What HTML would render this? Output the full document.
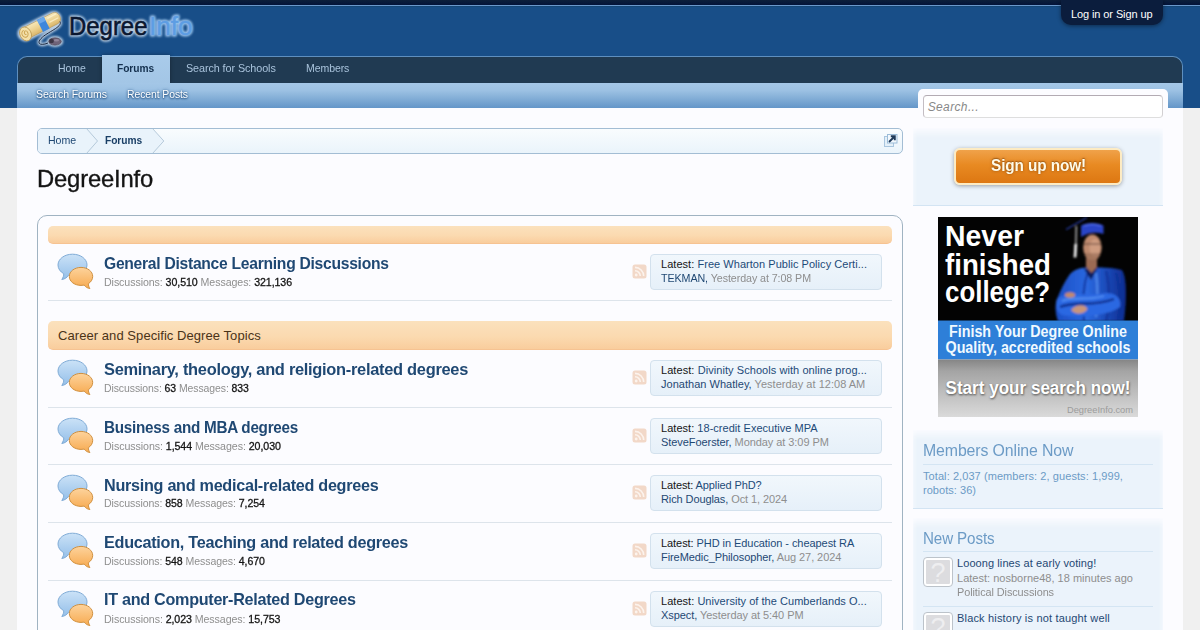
<!DOCTYPE html>
<html lang="en">
<head>
<meta charset="utf-8">
<title>DegreeInfo</title>
<style>
*{box-sizing:border-box;margin:0;padding:0}
html,body{width:1200px;height:630px;overflow:hidden}
body{font-family:"Liberation Sans",sans-serif;font-size:13px;color:#141414;background:#f0f0f0;position:relative}
a{text-decoration:none;color:#1d4a78}
.x{position:absolute;white-space:pre}
.x b{font-weight:normal;color:#141414;-webkit-text-stroke:0.3px #141414}
.x i{font-style:normal;color:#8e8e8e}
/* header */
#hdr{position:absolute;left:0;top:0;width:1200px;height:108px;background:#184e88}
#topstrip{position:absolute;left:0;top:0;width:1200px;height:7px;background:linear-gradient(#0c1f3b,#03143a 5px,#03143a);border-bottom:1px solid #164878}
#topstrip:after{content:"";position:absolute;left:0;top:5px;width:100%;height:1px;background:#6a98cc}
#login{position:absolute;left:1061px;top:0;width:102px;height:25px;background:#0b1d3d;border-radius:0 0 10px 10px;box-shadow:0 1px 4px rgba(0,0,0,.45)}
/* nav */
#tabs{position:absolute;left:17px;top:56px;width:1166px;height:27px;background:#203a52;border-radius:10px 10px 0 0;border-top:1px solid #5e8fbf;border-left:1px solid #5e8fbf;border-right:1px solid #5e8fbf}
#seltab{position:absolute;left:102px;top:55px;width:68px;height:28px;background:linear-gradient(#a9cbea,#a3c6e6);box-shadow:0 0 4px rgba(0,0,0,.35)}
#subnav{position:absolute;left:17px;top:83px;width:1166px;height:25px;background:linear-gradient(#a4c7e7 0,#9cc1e3 30%,#6496c8 100%)}
/* content */
#content{position:absolute;left:17px;top:108px;width:1166px;height:522px;background:#fcfcff}
#crumb{position:absolute;left:37px;top:128px;width:866px;height:26px;border:1px solid #a3bdd4;border-radius:5px;background:linear-gradient(#f9fcfe,#eaf4fb);overflow:hidden}
#list{position:absolute;left:37px;top:215px;width:866px;height:430px;border:1px solid #a0b3c2;border-radius:10px;background:#fcfcff}
.cat{position:absolute;left:48px;width:844px;background:linear-gradient(#fbe1bd,#fbdab0 55%,#f9cd9d);border-bottom:1px solid #f6c392;border-radius:5px}
.sep{position:absolute;left:48px;width:844px;height:1px;background:#dde4eb}
.lb{position:absolute;left:650px;width:232px;height:36px;border:1px solid #d3e1ed;border-radius:4px;background:linear-gradient(#f1f7fc,#e6f0f9)}
/* sidebar */
#searchbox{position:absolute;left:918px;top:89px;width:250px;height:30px;background:#fcfcff;border-radius:5px 5px 0 0}
#searchin{position:absolute;left:923px;top:95px;width:240px;height:23px;background:#fff;border:1px solid;border-color:#b3abb3 #d2d0d2 #dedede #c3bdc3;border-radius:4px}
.sbb{position:absolute;left:913px;width:250px;background:#ebf3fb;border-bottom:1px solid #d3e4f3;box-shadow:inset 0 9px 7px -5px #fcfcff,inset 5px 0 5px -5px #fcfcff,inset -5px 0 5px -5px #fcfcff}
#signup{position:absolute;left:954px;top:148px;width:168px;height:37px;border-radius:6px;border:2px solid #fdebc3;background:linear-gradient(#f0a24a 0,#e88a22 45%,#dd7712 100%);box-shadow:0 1px 4px rgba(0,0,0,.35)}
.sbl{position:absolute;left:923px;width:230px;height:1px;background:#d4e5f3}
.av{position:absolute;left:923px;width:30px;height:30px;border:1px solid #bcc3ca;border-radius:4px;background:#fff;padding:2px}
.av div{width:100%;height:100%;background:#dcdcdf;border-radius:1px;color:#eeeef0;font-size:27px;line-height:26px;text-align:center;overflow:hidden}
</style>
</head>
<body>
<svg width="0" height="0" style="position:absolute">
<defs>
<linearGradient id="gb" x1="0" y1="0" x2="0" y2="1"><stop offset="0" stop-color="#cbe2f7"/><stop offset="1" stop-color="#94bfe9"/></linearGradient>
<linearGradient id="go" x1="0" y1="0" x2="0" y2="1"><stop offset="0" stop-color="#fdd39c"/><stop offset="1" stop-color="#f7aa50"/></linearGradient>
</defs>
</svg>
<div id="hdr"></div>
<div id="topstrip"></div>
<div id="login"></div>
<svg class="x" style="left:10px;top:4px" width="200" height="52" viewBox="10 4 200 52">
<defs>
<filter id="glow" x="-20%" y="-30%" width="140%" height="160%"><feGaussianBlur stdDeviation="1"/></filter>
<linearGradient id="scr" x1="0" y1="0" x2="0" y2="1"><stop offset="0" stop-color="#f7e7b8"/><stop offset="0.55" stop-color="#ecd08e"/><stop offset="1" stop-color="#d9b56a"/></linearGradient>
</defs>
<!-- glow layer -->
<g filter="url(#glow)" opacity="0.95" fill="#c4d6e8" stroke="#c4d6e8">
  <g transform="rotate(-27 40 26)"><rect x="17" y="19.500" width="45" height="13" rx="6.500" stroke-width="3"/></g>
  <ellipse cx="55" cy="41.500" rx="7" ry="4.200" stroke-width="2.500"/>
  <path d="M60 21.500C63 27 47 32 41 38.500C36 44 41 46 48 43" fill="none" stroke-width="3.500"/>
  <text x="69" y="34.800" font-family="Liberation Sans,sans-serif" font-size="25.5" textLength="78.500" lengthAdjust="spacingAndGlyphs" stroke-width="3.600" stroke-linejoin="round">Degree</text>
  <text x="149" y="34.800" font-family="Liberation Sans,sans-serif" font-size="26" textLength="43.500" lengthAdjust="spacingAndGlyphs" stroke-width="3.200" stroke-linejoin="round" fill="#a6cff7" stroke="#a6cff7">Info</text>
</g>
<!-- scroll -->
<g transform="rotate(-27 40 26)">
  <rect x="19" y="20" width="43" height="12" rx="5" fill="url(#scr)" stroke="#b8985a" stroke-width="0.600"/>
  <rect x="40" y="19.300" width="7.500" height="13.400" fill="#3d86dc"/>
  <rect x="40" y="19.300" width="7.500" height="4.500" fill="#6aa6ea"/>
  <ellipse cx="23.500" cy="26.500" rx="5.600" ry="7.300" fill="#f3dfa8" stroke="#b48f48" stroke-width="0.700"/>
  <path d="M23.500 22.500a3 3.600 0 1 0 2.600 3.500a1.600 1.900 0 1 0 -2 1.500" fill="none" stroke="#c9a14e" stroke-width="0.900"/>
  <path d="M50 22.500H60M50 27H60" stroke="#fff6d6" stroke-width="1.200" opacity=".7"/>
</g>
<!-- cord + mouse -->
<path d="M60 21.500C63 27 47 32 41 38.500C36 44 41 46 48 43" fill="none" stroke="#0e1b33" stroke-width="0.900"/>
<ellipse cx="55" cy="41.500" rx="6.300" ry="3.700" fill="#6f6378" stroke="#3a3140" stroke-width="0.500"/>
<ellipse cx="51.500" cy="41" rx="2.400" ry="2.200" fill="#3d3645"/>
<ellipse cx="56.500" cy="40.300" rx="2.600" ry="1.300" fill="#9a8ea3" opacity=".8"/>
<!-- text -->
<text x="69" y="34.800" font-family="Liberation Sans,sans-serif" font-size="25.5" textLength="78.500" lengthAdjust="spacingAndGlyphs" fill="#0a1730" stroke="#0a1730" stroke-width="0.600">Degree</text>
<text x="149" y="34.800" font-family="Liberation Sans,sans-serif" font-size="26" textLength="43.500" lengthAdjust="spacingAndGlyphs" fill="#5d9de3" stroke="#5d9de3" stroke-width="0.500">Info</text>
</svg>
<div id="tabs"></div>
<div id="seltab"></div>
<div id="subnav"></div>
<div id="content"></div>
<div id="searchbox"></div>
<div id="searchin"></div>
<div id="crumb">
<svg style="position:absolute;left:0;top:0" width="140" height="24" viewBox="0 0 140 24">
  <path d="M0 0H114.500L125.800 12L114.500 24H0z" fill="#e9f3fb"/>
  <path d="M48.500 -0.500L59.500 12L48.500 24.500" fill="none" stroke="#b5c9da" stroke-width="1"/>
  <path d="M114.500 -0.500L125.800 12L114.500 24.500" fill="none" stroke="#b5c9da" stroke-width="1"/>
</svg>
<svg style="position:absolute;left:846px;top:5px" width="14" height="14" viewBox="0 0 14 14">
  <rect x="0.500" y="2.500" width="9" height="10" fill="#e4f0f9" stroke="#a9c6df"/>
  <rect x="3.500" y="0.500" width="9.500" height="8.500" fill="#f2f8fd" stroke="#9bbcd8"/>
  <path d="M5 8L10.500 2.500M6.800 2.300H10.800V6.300" fill="none" stroke="#1f3a5a" stroke-width="1.900"/>
</svg>
</div>
<div id="list"></div>
<svg class="x" style="left:55px;top:252.0px" width="42" height="40" viewBox="0 0 42 40" overflow="visible"><path d="M17.5 2.2C9.4 2.2 3 7 3 13c0 3.6 2.2 6.700 5.700 8.700c0.200 1.800 -0.600 3.900 -1.900 5.800c2.800 -0.300 5.300 -1.900 6.700 -4.300c1.300 0.300 2.600 0.400 4 0.400c8.100 0 14.500 -4.800 14.500 -10.700S25.600 2.200 17.500 2.200z" fill="url(#gb)" stroke="#7fabd6" stroke-width="1"/>
  <path d="M26 15.400c-6.500 0 -11.700 4 -11.700 9c0 5 5.200 9 11.700 9c1.100 0 2.200 -0.100 3.200 -0.300c1.300 1.900 3.400 3.200 5.700 3.400c-1 -1.500 -1.600 -3.200 -1.500 -4.800c2.600 -1.700 4.300 -4.300 4.300 -7.300c0 -5 -5.200 -9 -11.700 -9z" fill="url(#go)" stroke="#d0903f" stroke-width="1"/></svg>
<div class="x" style="left:104.00px;top:254.91px;font-size:17px;line-height:17px;color:#1f4873;font-weight:bold;letter-spacing:-0.300px;transform-origin:0 0;transform:scaleX(0.9208);">General Distance Learning Discussions</div>
<div class="x" style="left:104.00px;top:277.09px;font-size:11px;line-height:11px;color:#8e8e8e;letter-spacing:-0.080px;transform-origin:0 0;transform:scaleX(0.9663);">Discussions: <b>30,510</b> Messages: <b>321,136</b></div>
<svg class="x" style="left:631.5px;top:264.3px" width="15" height="15" viewBox="0 0 15 15"><rect x="0.500" y="0.500" width="14" height="14" rx="2.500" fill="#f2d8c8"/>
  <circle cx="4.200" cy="11" r="1.400" fill="#fcf3ed"/>
  <path d="M3 6.800a5.300 5.300 0 0 1 5.300 5.300" fill="none" stroke="#fcf3ed" stroke-width="1.600"/>
  <path d="M3 3.400a8.700 8.700 0 0 1 8.700 8.700" fill="none" stroke="#fcf3ed" stroke-width="1.600"/></svg>
<div class="lb" style="top:254px"></div>
<div class="x" style="left:661.00px;top:259.09px;font-size:11px;line-height:11px;color:#141414;letter-spacing:0.042px;">Latest: <a>Free Wharton Public Policy Certi...</a></div>
<div class="x" style="left:661.00px;top:273.19px;font-size:11px;line-height:11px;color:#1f4873;letter-spacing:-0.080px;transform-origin:0 0;transform:scaleX(0.9722);">TEKMAN, <i>Yesterday at 7:08 PM</i></div>
<svg class="x" style="left:55px;top:357.7px" width="42" height="40" viewBox="0 0 42 40" overflow="visible"><path d="M17.5 2.2C9.4 2.2 3 7 3 13c0 3.6 2.2 6.700 5.700 8.700c0.200 1.800 -0.600 3.900 -1.900 5.800c2.800 -0.300 5.300 -1.900 6.700 -4.300c1.300 0.300 2.600 0.400 4 0.400c8.100 0 14.500 -4.800 14.500 -10.700S25.600 2.200 17.500 2.200z" fill="url(#gb)" stroke="#7fabd6" stroke-width="1"/>
  <path d="M26 15.400c-6.500 0 -11.700 4 -11.700 9c0 5 5.200 9 11.700 9c1.100 0 2.200 -0.100 3.200 -0.300c1.300 1.900 3.400 3.200 5.700 3.400c-1 -1.500 -1.600 -3.200 -1.500 -4.800c2.600 -1.700 4.300 -4.300 4.300 -7.300c0 -5 -5.200 -9 -11.700 -9z" fill="url(#go)" stroke="#d0903f" stroke-width="1"/></svg>
<div class="x" style="left:104.00px;top:360.61px;font-size:17px;line-height:17px;color:#1f4873;font-weight:bold;letter-spacing:-0.300px;transform-origin:0 0;transform:scaleX(0.9655);">Seminary, theology, and religion-related degrees</div>
<div class="x" style="left:104.00px;top:382.79px;font-size:11px;line-height:11px;color:#8e8e8e;letter-spacing:-0.080px;transform-origin:0 0;transform:scaleX(0.9503);">Discussions: <b>63</b> Messages: <b>833</b></div>
<svg class="x" style="left:631.5px;top:370.0px" width="15" height="15" viewBox="0 0 15 15"><rect x="0.500" y="0.500" width="14" height="14" rx="2.500" fill="#f2d8c8"/>
  <circle cx="4.200" cy="11" r="1.400" fill="#fcf3ed"/>
  <path d="M3 6.800a5.300 5.300 0 0 1 5.300 5.300" fill="none" stroke="#fcf3ed" stroke-width="1.600"/>
  <path d="M3 3.400a8.700 8.700 0 0 1 8.700 8.700" fill="none" stroke="#fcf3ed" stroke-width="1.600"/></svg>
<div class="lb" style="top:360px"></div>
<div class="x" style="left:661.00px;top:364.79px;font-size:11px;line-height:11px;color:#141414;letter-spacing:0.068px;">Latest: <a>Divinity Schools with online prog...</a></div>
<div class="x" style="left:661.00px;top:378.89px;font-size:11px;line-height:11px;color:#1f4873;letter-spacing:0.022px;">Jonathan Whatley, <i>Yesterday at 12:08 AM</i></div>
<svg class="x" style="left:55px;top:415.5px" width="42" height="40" viewBox="0 0 42 40" overflow="visible"><path d="M17.5 2.2C9.4 2.2 3 7 3 13c0 3.6 2.2 6.700 5.700 8.700c0.200 1.800 -0.600 3.900 -1.900 5.800c2.800 -0.300 5.300 -1.900 6.700 -4.300c1.300 0.300 2.600 0.400 4 0.400c8.100 0 14.500 -4.800 14.500 -10.700S25.600 2.200 17.500 2.200z" fill="url(#gb)" stroke="#7fabd6" stroke-width="1"/>
  <path d="M26 15.400c-6.500 0 -11.700 4 -11.700 9c0 5 5.200 9 11.700 9c1.100 0 2.200 -0.100 3.200 -0.300c1.300 1.900 3.400 3.200 5.700 3.400c-1 -1.500 -1.600 -3.200 -1.500 -4.800c2.600 -1.700 4.300 -4.300 4.300 -7.300c0 -5 -5.200 -9 -11.700 -9z" fill="url(#go)" stroke="#d0903f" stroke-width="1"/></svg>
<div class="x" style="left:104.00px;top:419.11px;font-size:17px;line-height:17px;color:#1f4873;font-weight:bold;letter-spacing:-0.300px;transform-origin:0 0;transform:scaleX(0.8978);">Business and MBA degrees</div>
<div class="x" style="left:104.00px;top:440.59px;font-size:11px;line-height:11px;color:#8e8e8e;letter-spacing:-0.080px;transform-origin:0 0;transform:scaleX(0.9689);">Discussions: <b>1,544</b> Messages: <b>20,030</b></div>
<svg class="x" style="left:631.5px;top:427.8px" width="15" height="15" viewBox="0 0 15 15"><rect x="0.500" y="0.500" width="14" height="14" rx="2.500" fill="#f2d8c8"/>
  <circle cx="4.200" cy="11" r="1.400" fill="#fcf3ed"/>
  <path d="M3 6.800a5.300 5.300 0 0 1 5.300 5.300" fill="none" stroke="#fcf3ed" stroke-width="1.600"/>
  <path d="M3 3.400a8.700 8.700 0 0 1 8.700 8.700" fill="none" stroke="#fcf3ed" stroke-width="1.600"/></svg>
<div class="lb" style="top:418px"></div>
<div class="x" style="left:661.00px;top:422.59px;font-size:11px;line-height:11px;color:#141414;letter-spacing:0.032px;">Latest: <a>18-credit Executive MPA</a></div>
<div class="x" style="left:661.00px;top:436.69px;font-size:11px;line-height:11px;color:#1f4873;letter-spacing:-0.068px;">SteveFoerster, <i>Monday at 3:09 PM</i></div>
<svg class="x" style="left:55px;top:473.0px" width="42" height="40" viewBox="0 0 42 40" overflow="visible"><path d="M17.5 2.2C9.4 2.2 3 7 3 13c0 3.6 2.2 6.700 5.700 8.700c0.200 1.800 -0.600 3.900 -1.900 5.800c2.800 -0.300 5.300 -1.900 6.700 -4.300c1.300 0.300 2.600 0.400 4 0.400c8.100 0 14.500 -4.800 14.500 -10.700S25.600 2.200 17.500 2.200z" fill="url(#gb)" stroke="#7fabd6" stroke-width="1"/>
  <path d="M26 15.400c-6.500 0 -11.700 4 -11.700 9c0 5 5.200 9 11.700 9c1.100 0 2.200 -0.100 3.200 -0.300c1.300 1.900 3.400 3.200 5.700 3.400c-1 -1.500 -1.600 -3.200 -1.500 -4.800c2.600 -1.700 4.300 -4.300 4.300 -7.300c0 -5 -5.200 -9 -11.700 -9z" fill="url(#go)" stroke="#d0903f" stroke-width="1"/></svg>
<div class="x" style="left:104.00px;top:476.61px;font-size:17px;line-height:17px;color:#1f4873;font-weight:bold;letter-spacing:-0.300px;transform-origin:0 0;transform:scaleX(0.9526);">Nursing and medical-related degrees</div>
<div class="x" style="left:104.00px;top:498.09px;font-size:11px;line-height:11px;color:#8e8e8e;letter-spacing:-0.080px;transform-origin:0 0;transform:scaleX(0.9604);">Discussions: <b>858</b> Messages: <b>7,254</b></div>
<svg class="x" style="left:631.5px;top:485.3px" width="15" height="15" viewBox="0 0 15 15"><rect x="0.500" y="0.500" width="14" height="14" rx="2.500" fill="#f2d8c8"/>
  <circle cx="4.200" cy="11" r="1.400" fill="#fcf3ed"/>
  <path d="M3 6.800a5.300 5.300 0 0 1 5.300 5.300" fill="none" stroke="#fcf3ed" stroke-width="1.600"/>
  <path d="M3 3.400a8.700 8.700 0 0 1 8.700 8.700" fill="none" stroke="#fcf3ed" stroke-width="1.600"/></svg>
<div class="lb" style="top:475px"></div>
<div class="x" style="left:661.00px;top:480.09px;font-size:11px;line-height:11px;color:#141414;letter-spacing:-0.113px;">Latest: <a>Applied PhD?</a></div>
<div class="x" style="left:661.00px;top:494.19px;font-size:11px;line-height:11px;color:#1f4873;letter-spacing:-0.096px;">Rich Douglas, <i>Oct 1, 2024</i></div>
<svg class="x" style="left:55px;top:530.8px" width="42" height="40" viewBox="0 0 42 40" overflow="visible"><path d="M17.5 2.2C9.4 2.2 3 7 3 13c0 3.6 2.2 6.700 5.700 8.700c0.200 1.800 -0.600 3.900 -1.900 5.800c2.800 -0.300 5.300 -1.900 6.700 -4.300c1.300 0.300 2.600 0.400 4 0.400c8.100 0 14.500 -4.800 14.500 -10.700S25.600 2.200 17.500 2.200z" fill="url(#gb)" stroke="#7fabd6" stroke-width="1"/>
  <path d="M26 15.400c-6.500 0 -11.700 4 -11.700 9c0 5 5.200 9 11.700 9c1.100 0 2.200 -0.100 3.200 -0.300c1.300 1.900 3.400 3.200 5.700 3.400c-1 -1.500 -1.600 -3.200 -1.500 -4.800c2.600 -1.700 4.300 -4.300 4.300 -7.300c0 -5 -5.200 -9 -11.700 -9z" fill="url(#go)" stroke="#d0903f" stroke-width="1"/></svg>
<div class="x" style="left:104.00px;top:533.71px;font-size:17px;line-height:17px;color:#1f4873;font-weight:bold;letter-spacing:-0.300px;transform-origin:0 0;transform:scaleX(0.9541);">Education, Teaching and related degrees</div>
<div class="x" style="left:104.00px;top:555.89px;font-size:11px;line-height:11px;color:#8e8e8e;letter-spacing:-0.080px;transform-origin:0 0;transform:scaleX(0.9604);">Discussions: <b>548</b> Messages: <b>4,670</b></div>
<svg class="x" style="left:631.5px;top:543.1px" width="15" height="15" viewBox="0 0 15 15"><rect x="0.500" y="0.500" width="14" height="14" rx="2.500" fill="#f2d8c8"/>
  <circle cx="4.200" cy="11" r="1.400" fill="#fcf3ed"/>
  <path d="M3 6.800a5.300 5.300 0 0 1 5.300 5.300" fill="none" stroke="#fcf3ed" stroke-width="1.600"/>
  <path d="M3 3.400a8.700 8.700 0 0 1 8.700 8.700" fill="none" stroke="#fcf3ed" stroke-width="1.600"/></svg>
<div class="lb" style="top:533px"></div>
<div class="x" style="left:661.00px;top:537.89px;font-size:11px;line-height:11px;color:#141414;letter-spacing:-0.065px;">Latest: <a>PHD in Education - cheapest RA</a></div>
<div class="x" style="left:661.00px;top:551.99px;font-size:11px;line-height:11px;color:#1f4873;letter-spacing:-0.073px;">FireMedic_Philosopher, <i>Aug 27, 2024</i></div>
<svg class="x" style="left:55px;top:588.5px" width="42" height="40" viewBox="0 0 42 40" overflow="visible"><path d="M17.5 2.2C9.4 2.2 3 7 3 13c0 3.6 2.2 6.700 5.700 8.700c0.200 1.800 -0.600 3.900 -1.900 5.800c2.800 -0.300 5.300 -1.900 6.700 -4.300c1.300 0.300 2.600 0.400 4 0.400c8.100 0 14.500 -4.800 14.500 -10.700S25.600 2.200 17.500 2.200z" fill="url(#gb)" stroke="#7fabd6" stroke-width="1"/>
  <path d="M26 15.400c-6.500 0 -11.700 4 -11.700 9c0 5 5.200 9 11.700 9c1.100 0 2.200 -0.100 3.200 -0.300c1.300 1.900 3.400 3.200 5.700 3.400c-1 -1.500 -1.600 -3.200 -1.500 -4.800c2.600 -1.700 4.300 -4.300 4.300 -7.300c0 -5 -5.200 -9 -11.700 -9z" fill="url(#go)" stroke="#d0903f" stroke-width="1"/></svg>
<div class="x" style="left:104.00px;top:591.41px;font-size:17px;line-height:17px;color:#1f4873;font-weight:bold;letter-spacing:-0.300px;transform-origin:0 0;transform:scaleX(0.9507);">IT and Computer-Related Degrees</div>
<div class="x" style="left:104.00px;top:613.59px;font-size:11px;line-height:11px;color:#8e8e8e;letter-spacing:-0.080px;transform-origin:0 0;transform:scaleX(0.9667);">Discussions: <b>2,023</b> Messages: <b>15,753</b></div>
<svg class="x" style="left:631.5px;top:600.8px" width="15" height="15" viewBox="0 0 15 15"><rect x="0.500" y="0.500" width="14" height="14" rx="2.500" fill="#f2d8c8"/>
  <circle cx="4.200" cy="11" r="1.400" fill="#fcf3ed"/>
  <path d="M3 6.800a5.300 5.300 0 0 1 5.300 5.300" fill="none" stroke="#fcf3ed" stroke-width="1.600"/>
  <path d="M3 3.400a8.700 8.700 0 0 1 8.700 8.700" fill="none" stroke="#fcf3ed" stroke-width="1.600"/></svg>
<div class="lb" style="top:591px"></div>
<div class="x" style="left:661.00px;top:595.59px;font-size:11px;line-height:11px;color:#141414;letter-spacing:0.038px;">Latest: <a>University of the Cumberlands O...</a></div>
<div class="x" style="left:661.00px;top:609.69px;font-size:11px;line-height:11px;color:#1f4873;letter-spacing:-0.065px;">Xspect, <i>Yesterday at 5:40 PM</i></div>
<div class="sep" style="top:300px"></div>
<div class="sep" style="top:407px"></div>
<div class="sep" style="top:464px"></div>
<div class="sep" style="top:522px"></div>
<div class="sep" style="top:580px"></div>
<div class="cat" style="top:226px;height:18px"></div>
<div class="cat" style="top:321px;height:29px"></div>
<div class="x" style="left:58.00px;top:328.80px;font-size:13px;line-height:13px;color:#4a3318;letter-spacing:0.065px;">Career and Specific Degree Topics</div>
<!-- sidebar -->
<div class="sbb" style="top:128px;height:78px"></div>
<div id="signup"></div>
<svg class="x" style="left:938px;top:217px" width="200" height="200" viewBox="0 0 200 200">
<defs>
<linearGradient id="adg" x1="0" y1="0" x2="0" y2="1"><stop offset="0" stop-color="#858585"/><stop offset="0.200" stop-color="#a4a4a4"/><stop offset="0.550" stop-color="#bcbcbc"/><stop offset="1" stop-color="#dadada"/></linearGradient>
<linearGradient id="gown" x1="0" y1="0" x2="1" y2="0"><stop offset="0" stop-color="#1c4ec4"/><stop offset="0.450" stop-color="#2a68e0"/><stop offset="1" stop-color="#0e2c90"/></linearGradient>
<filter id="sb" x="-10%" y="-10%" width="120%" height="120%"><feGaussianBlur stdDeviation="0.800"/></filter>
<filter id="ts" x="-5%" y="-20%" width="110%" height="150%"><feGaussianBlur stdDeviation="1"/></filter>
</defs>
<rect width="200" height="104" fill="#030303"/>
<!-- man -->
<g filter="url(#sb)">
  <path d="M133 56C140 50 148 50 152 52C158 50 170 50 184 53C190 62 188 90 186 104L120 104C117 96 117 88 119 82C124 70 128 62 133 56Z" fill="url(#gown)"/>
  <path d="M150 54C146 66 144 84 146 104M168 54C172 70 172 90 168 104M178 56C182 70 182 90 180 104" stroke="#0f2f96" stroke-width="2.200" fill="none" opacity=".8"/>
  <path d="M158 56C160 70 160 84 158 100" stroke="#5a94f4" stroke-width="2.500" fill="none" opacity=".7"/>
  <path d="M119 82C130 73 150 80 168 76C178 76 184 82 182 90C170 99 140 101 124 98C118 94 117 88 119 82Z" fill="#2c68e2"/>
  <path d="M122 90C136 84 156 90 176 82" stroke="#0e2c8c" stroke-width="2.400" fill="none"/>
  <path d="M124 84C134 79 150 84 166 79" stroke="#5c98f6" stroke-width="1.800" fill="none" opacity=".8"/>
  <ellipse cx="132" cy="78" rx="5.200" ry="2.800" fill="#c28a6e"/>
  <path d="M133 93C139 86 148 88 149.500 92C146 97.500 138 98.500 133 93Z" fill="#c9957a"/>
  <path d="M146 52L153 63L160 50Z" fill="#0b1c5c"/>
  <path d="M148 40h11v10L153.500 56L148 50Z" fill="#9c6a52"/>
  <ellipse cx="154.400" cy="30.500" rx="9.300" ry="13" fill="#bf8a6e"/>
  <ellipse cx="157" cy="31" rx="5.500" ry="9" fill="#d3a084" opacity=".8"/>
  <path d="M146.500 36C148 42 151 45 154.500 45C158 45 161 42 162.500 36" fill="#8f6650" opacity=".55"/>
  <path d="M146 27h17" stroke="#4a3228" stroke-width="1.100" opacity=".75"/>
  <path d="M143 8.500C148 5 160 5 165.500 8.500L165.500 17C158 14.500 150 15.500 143 20Z" fill="#2a44c6"/>
  <path d="M146 9C151 7 158 7 163 9" stroke="#5570e8" stroke-width="1.500" fill="none" opacity=".8"/>
  <path d="M128 12.500L149 0.500" stroke="#2a3fb0" stroke-width="1.300"/>
  <path d="M138.300 9L137.800 30" stroke="#e2e2e2" stroke-width="1.200"/>
  <path d="M137.800 27L137 40.500" stroke="#f6f6f6" stroke-width="2.700"/>
</g>
<!-- headline -->
<g font-family="Liberation Sans,sans-serif" font-weight="bold" fill="#fff">
  <text x="7" y="28.500" font-size="29" textLength="79" lengthAdjust="spacingAndGlyphs">Never</text>
  <text x="7" y="58" font-size="29" textLength="106" lengthAdjust="spacingAndGlyphs">finished</text>
  <text x="7" y="85.400" font-size="29" textLength="105" lengthAdjust="spacingAndGlyphs">college?</text>
</g>
<rect y="103.500" width="200" height="39" fill="#2e7fd8"/>
<g font-family="Liberation Sans,sans-serif" font-weight="bold" fill="#f0f9ff" font-size="16">
  <text x="11" y="119.500" textLength="178" lengthAdjust="spacingAndGlyphs">Finish Your Degree Online</text>
  <text x="7.500" y="135.600" textLength="185" lengthAdjust="spacingAndGlyphs">Quality, accredited schools</text>
</g>
<rect y="142.500" width="200" height="57.500" fill="url(#adg)"/>
<g font-family="Liberation Sans,sans-serif" font-weight="bold" font-size="18">
  <text x="8" y="177.500" textLength="185" lengthAdjust="spacingAndGlyphs" fill="#444" filter="url(#ts)">Start your search now!</text>
  <text x="7.500" y="176.500" textLength="185" lengthAdjust="spacingAndGlyphs" fill="#fff">Start your search now!</text>
</g>
<text x="129" y="196" font-family="Liberation Sans,sans-serif" font-size="9" textLength="66" lengthAdjust="spacingAndGlyphs" fill="#9c9c9c">DegreeInfo.com</text>
</svg>
<div class="sbb" style="top:430px;height:79px"></div>
<div class="sbl" style="top:464px"></div>
<div class="sbb" style="top:518px;height:130px"></div>
<div class="sbl" style="top:551px"></div>
<div class="av" style="top:557px"><div>?</div></div>
<div class="sbl" style="top:606px"></div>
<div class="av" style="top:612px"><div>?</div></div>
<div class="x" style="left:923.00px;top:442.96px;font-size:16px;line-height:16px;color:#6c9bc6;letter-spacing:-0.116px;transform-origin:0 0;transform:scaleX(0.9912);">Members Online Now</div>
<div class="x" style="left:923.00px;top:470.99px;font-size:11px;line-height:11px;color:#6c9bc6;letter-spacing:0.078px;">Total: 2,037 (members: 2, guests: 1,999,</div>
<div class="x" style="left:923.00px;top:484.69px;font-size:11px;line-height:11px;color:#6c9bc6;letter-spacing:0.037px;">robots: 36)</div>
<div class="x" style="left:923.00px;top:530.86px;font-size:16px;line-height:16px;color:#6c9bc6;letter-spacing:-0.116px;transform-origin:0 0;transform:scaleX(0.9480);">New Posts</div>
<div class="x" style="left:957.00px;top:558.39px;font-size:11px;line-height:11px;color:#1f4873;letter-spacing:0.083px;">Looong lines at early voting!</div>
<div class="x" style="left:957.00px;top:573.19px;font-size:11px;line-height:11px;color:#8e8e8e;letter-spacing:0.014px;">Latest: nosborne48, 18 minutes ago</div>
<div class="x" style="left:957.00px;top:586.89px;font-size:11px;line-height:11px;color:#8e8e8e;letter-spacing:-0.080px;transform-origin:0 0;transform:scaleX(0.9900);">Political Discussions</div>
<div class="x" style="left:957.00px;top:613.29px;font-size:11px;line-height:11px;color:#1f4873;letter-spacing:0.176px;">Black history is not taught well</div>
<div class="x" style="left:1071.00px;top:8.69px;font-size:11px;line-height:11px;color:#ffffff;letter-spacing:-0.098px;">Log in or Sign up</div>
<div class="x" style="left:58.30px;top:62.69px;font-size:11px;line-height:11px;color:#a9c3dc;letter-spacing:-0.080px;transform-origin:0 0;transform:scaleX(0.9544);">Home</div>
<div class="x" style="left:117.30px;top:62.99px;font-size:11px;line-height:11px;color:#14304e;font-weight:bold;letter-spacing:-0.080px;transform-origin:0 0;transform:scaleX(0.9282);">Forums</div>
<div class="x" style="left:185.70px;top:62.69px;font-size:11px;line-height:11px;color:#a9c3dc;letter-spacing:-0.080px;transform-origin:0 0;transform:scaleX(0.9804);">Search for Schools</div>
<div class="x" style="left:305.70px;top:62.69px;font-size:11px;line-height:11px;color:#a9c3dc;letter-spacing:-0.080px;transform-origin:0 0;transform:scaleX(0.9562);">Members</div>
<div class="x" style="left:35.70px;top:88.99px;font-size:11px;line-height:11px;color:#ffffff;letter-spacing:-0.080px;transform-origin:0 0;transform:scaleX(0.9573);text-shadow:0 0 0 transparent,0 1px 2px #1c4a7c,0 0 3px #2b5a8c;">Search Forums</div>
<div class="x" style="left:127.30px;top:88.99px;font-size:11px;line-height:11px;color:#ffffff;letter-spacing:-0.080px;transform-origin:0 0;transform:scaleX(0.9463);text-shadow:0 0 0 transparent,0 1px 2px #1c4a7c,0 0 3px #2b5a8c;">Recent Posts</div>
<div class="x" style="left:48.00px;top:134.69px;font-size:11px;line-height:11px;color:#1f4873;letter-spacing:-0.080px;transform-origin:0 0;transform:scaleX(0.9647);">Home</div>
<div class="x" style="left:104.50px;top:134.69px;font-size:11px;line-height:11px;color:#1a3f66;font-weight:bold;letter-spacing:-0.080px;transform-origin:0 0;transform:scaleX(0.9282);">Forums</div>
<div class="x" style="left:37.30px;top:166.68px;font-size:24px;line-height:24px;color:#141414;letter-spacing:-0.175px;transform-origin:0 0;transform:scaleX(0.9914);-webkit-text-stroke:0.35px #141414;">DegreeInfo</div>
<div class="x" style="left:927.70px;top:100.64px;font-size:12px;line-height:12px;color:#888888;font-style:italic;letter-spacing:0.363px;">Search...</div>
<div class="x" style="left:990.70px;top:158.46px;font-size:16px;line-height:16px;color:#fffbe8;font-weight:bold;letter-spacing:-0.116px;transform-origin:0 0;transform:scaleX(0.9593);text-shadow:0 0 0 transparent,0 0 3px rgba(120,60,0,.7),0 -1px 1px rgba(120,60,0,.5);">Sign up now!</div>
</body>
</html>
